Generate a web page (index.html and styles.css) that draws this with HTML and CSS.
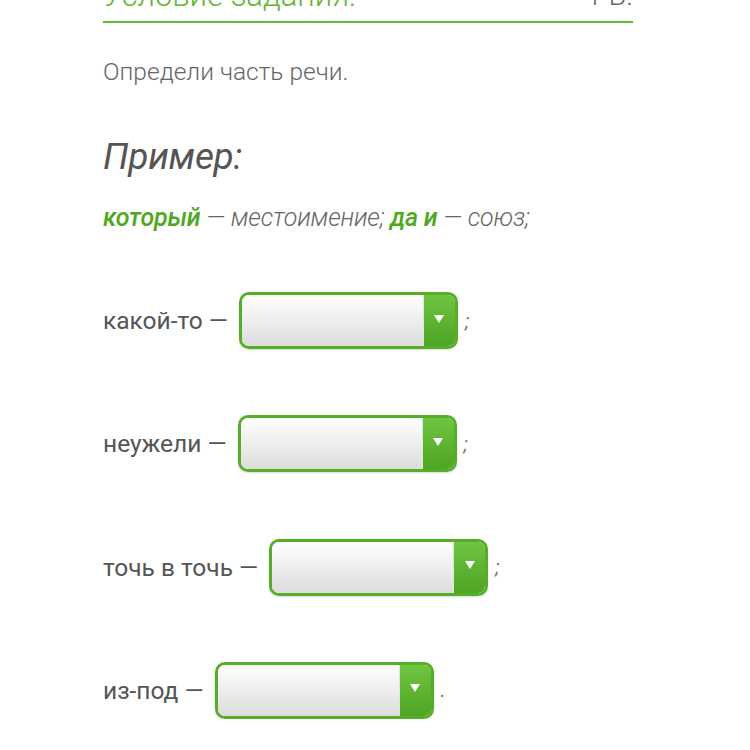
FILE: index.html
```html
<!DOCTYPE html>
<html lang="ru">
<head>
    <meta charset="UTF-8">
    <meta name="viewport" content="width=device-width, initial-scale=1.0">
    <title>Часть речи</title>
    <link rel="stylesheet" href="styles.css">
</head>
<body>
    <div class="page">
        <div class="task-head">
            <span class="task-title">Условие задания:</span>
            <span class="task-score">1 Б.</span>
        </div>
        <p class="task-text">Определи часть речи.</p>
        <h2 class="example-title">Пример:</h2>
        <p class="example"><b>который</b> — местоимение; <b>да и</b> — союз;</p>

        <div class="answers">
            <div class="row">
                <span class="word">какой-то —</span>
                <div class="pick"><span class="pick-field"></span><span class="pick-btn"></span></div>
                <span class="tail">;</span>
            </div>
            <div class="row">
                <span class="word">неужели —</span>
                <div class="pick"><span class="pick-field"></span><span class="pick-btn"></span></div>
                <span class="tail">;</span>
            </div>
            <div class="row">
                <span class="word">точь в точь —</span>
                <div class="pick"><span class="pick-field"></span><span class="pick-btn"></span></div>
                <span class="tail">;</span>
            </div>
            <div class="row">
                <span class="word">из-под —</span>
                <div class="pick"><span class="pick-field"></span><span class="pick-btn"></span></div>
                <span class="tail">.</span>
            </div>
        </div>
    </div>
</body>
</html>
```

FILE: styles.css
```css
/* Reset */
* {
    margin: 0;
    padding: 0;
    box-sizing: border-box;
}

body {
    font-family: 'Roboto', 'Liberation Sans', sans-serif;
    background-color: #ffffff;
    color: #555;
    overflow: hidden;
}

.page {
    width: 530px;
    margin-left: 103px;
    margin-top: -22px;
}

/* Header with green line */
.task-head {
    display: flex;
    justify-content: space-between;
    align-items: flex-end;
    border-bottom: 2px solid #62b83a;
    height: 45px;
    line-height: 34px;
    padding-bottom: 8px;
}

.task-title {
    color: #5fb832;
    font-size: 31px;
    font-weight: 300;
}

.task-score {
    color: #666;
    font-size: 28px;
    font-weight: 300;
}

.task-text {
    margin-top: 34px;
    font-size: 24.5px;
    line-height: 30px;
    font-weight: 300;
    color: #666;
}

.example-title {
    margin-top: 48px;
    font-size: 37px;
    line-height: 44px;
    font-style: italic;
    font-weight: 400;
    letter-spacing: -0.3px;
    color: #555;
}

.example {
    margin-top: 23px;
    font-size: 25px;
    line-height: 32px;
    font-style: italic;
    font-weight: 300;
    letter-spacing: -0.2px;
    color: #666;
}

.example b {
    color: #4fa81f;
    font-weight: 500;
}

/* Answer rows */
.answers {
    display: flex;
    flex-direction: column;
    gap: 66.33px;
    margin-top: 58px;
}

.row {
    display: flex;
    align-items: center;
    height: 57px;
}

.word {
    font-size: 24.5px;
    color: #555;
    margin-right: 11px;
}

.tail {
    font-size: 20px;
    font-style: italic;
    color: #777;
    margin-left: 7px;
}

.pick {
    display: flex;
    width: 219px;
    height: 57px;
    border: 3px solid #56ad28;
    border-radius: 10px;
    overflow: hidden;
    box-shadow: 0 1px 2px rgba(0, 0, 0, 0.15);
}

.pick-field {
    flex: 1;
    background: linear-gradient(#ffffff, #dcdcdc);
    border-right: 1px solid #d8ecd0;
}

.pick-btn {
    width: 31px;
    background: linear-gradient(#6fc440, #4fa524);
    display: flex;
    align-items: center;
    justify-content: center;
}

.pick-btn::after {
    content: "";
    border-left: 5px solid transparent;
    border-right: 5px solid transparent;
    border-top: 8px solid #ffffff;
    margin-top: -4px;
}
```
